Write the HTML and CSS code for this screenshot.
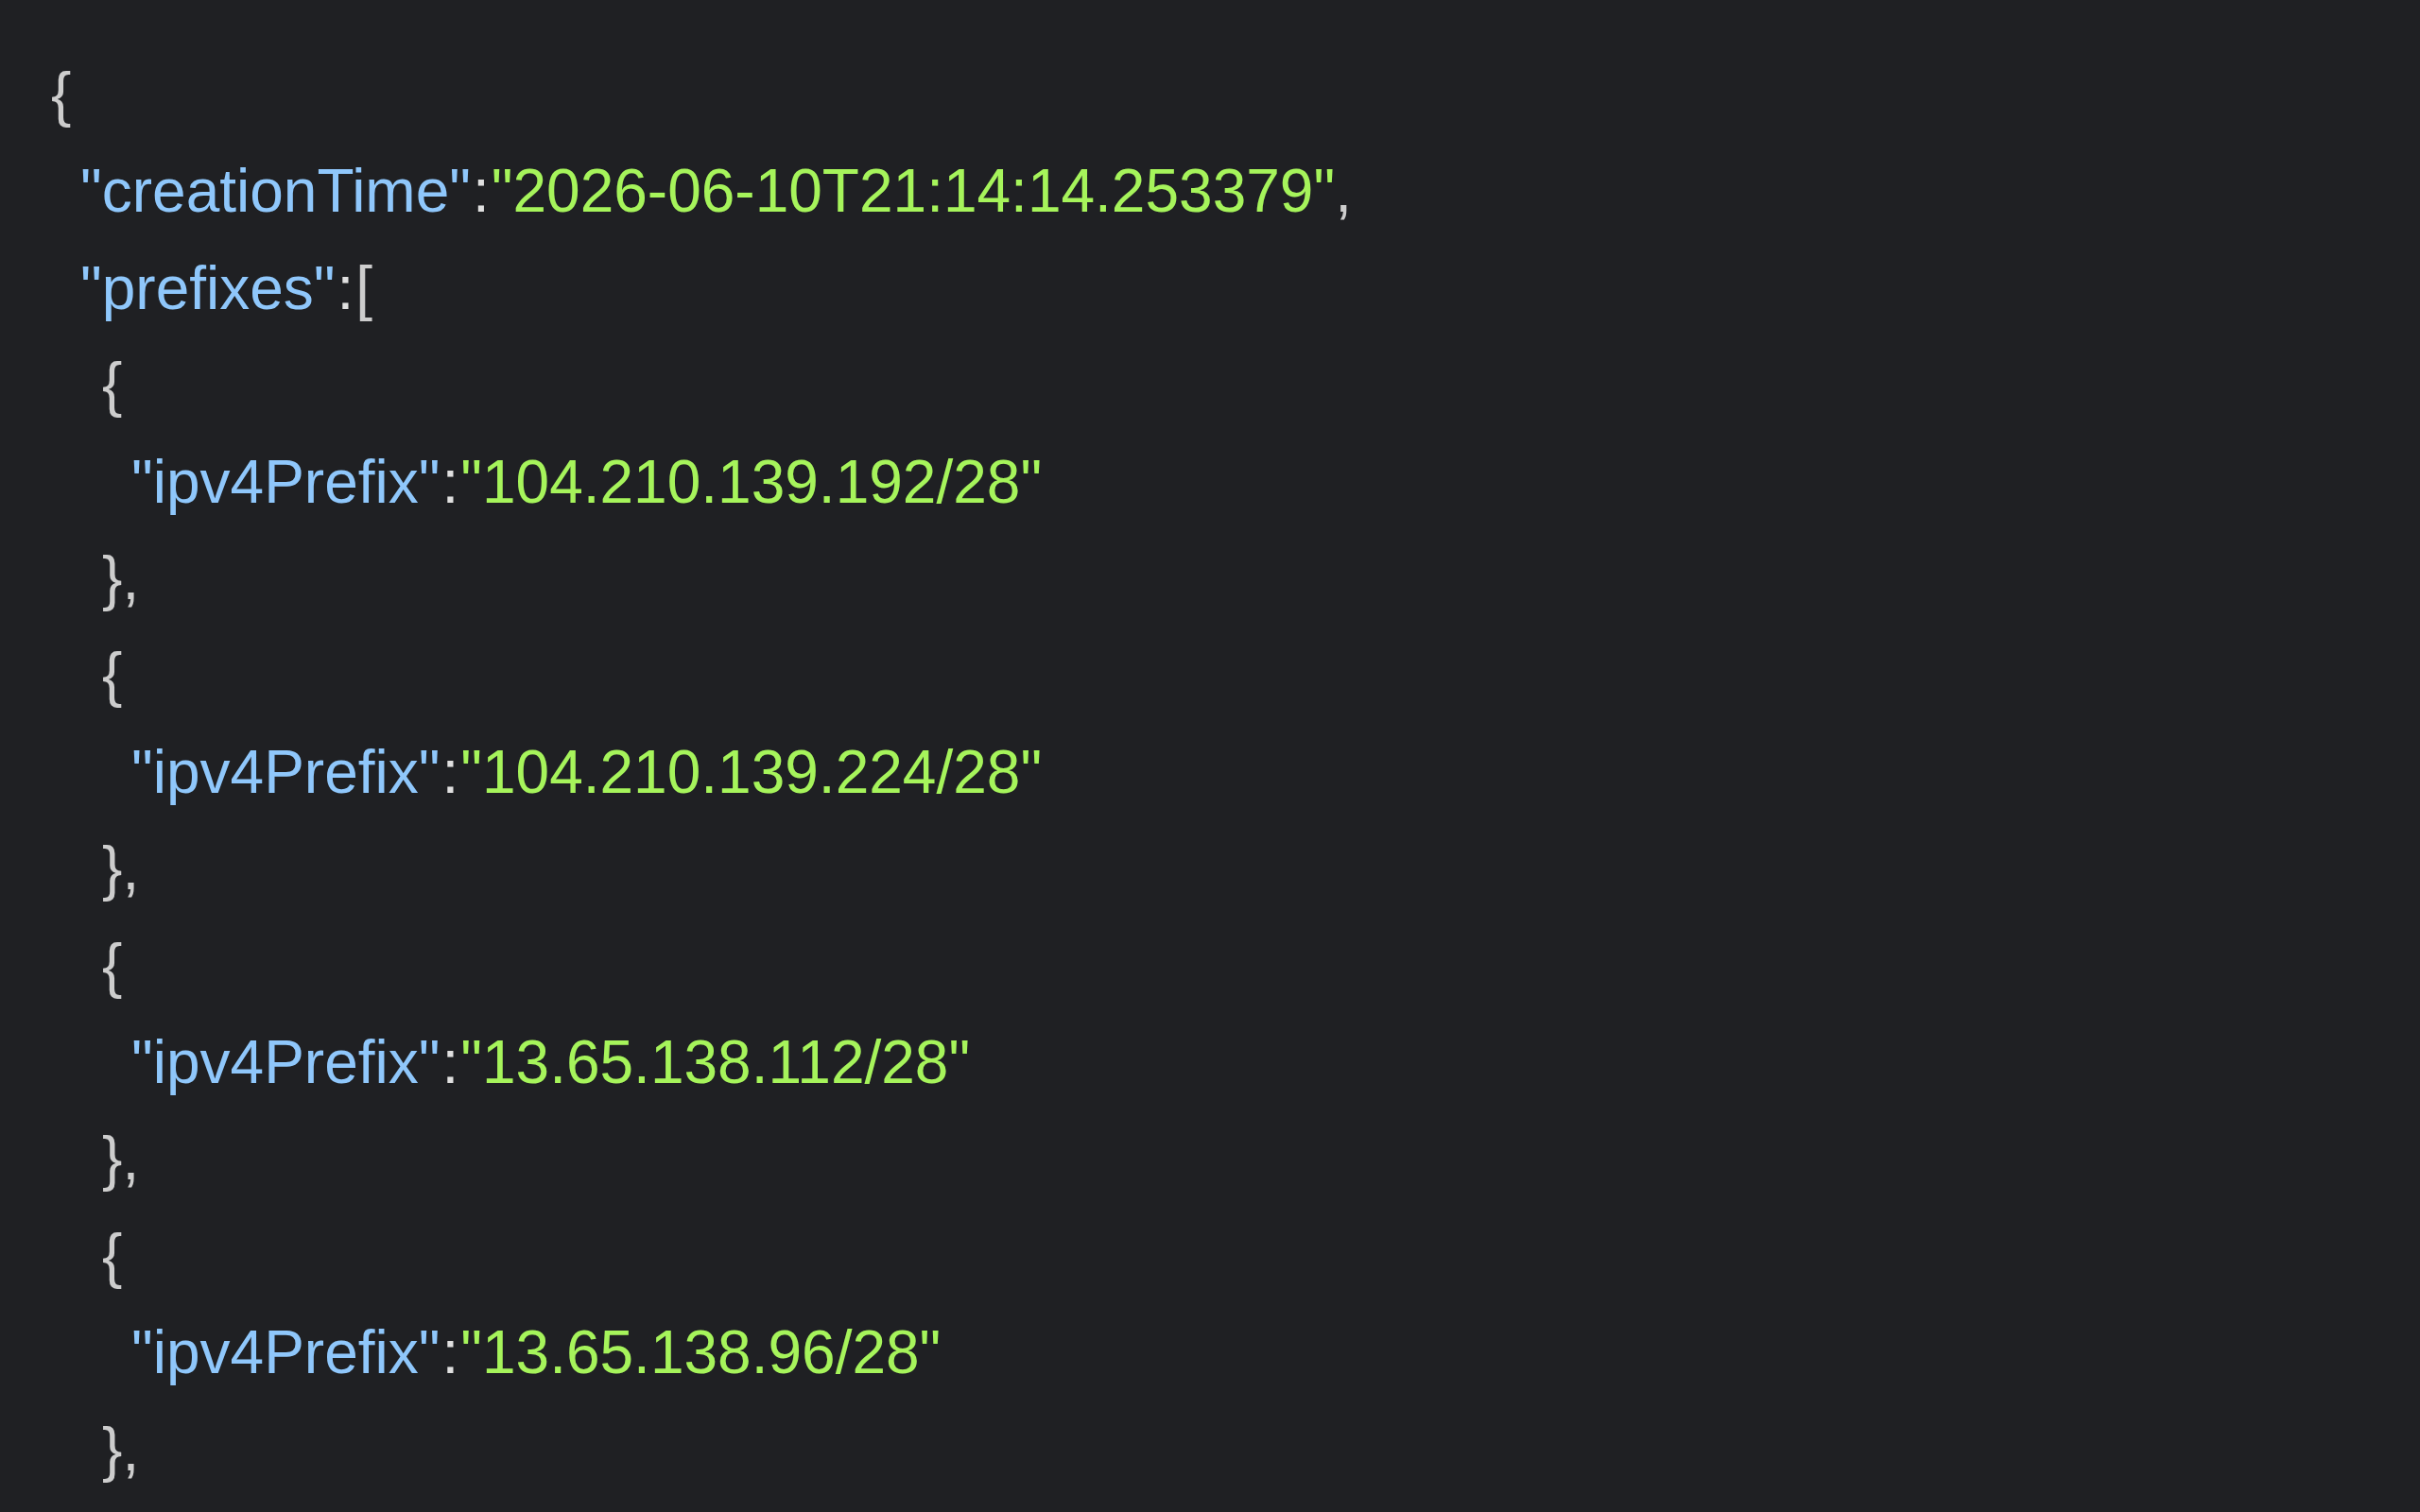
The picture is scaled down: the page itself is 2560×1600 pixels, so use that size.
FILE: index.html
```html
<!DOCTYPE html>
<html lang="en">
<head>
<meta charset="utf-8">
<title>JSON</title>
<link rel="stylesheet" href="styles.css">
</head>
<body>
<div class="json">
  <div class="line l0"><span class="p">{</span></div>
  <div class="line l1"><span class="k">"creationTime"</span><span class="c">:</span><span class="s">"2026-06-10T21:14:14.253379"</span><span class="p">,</span></div>
  <div class="line l1"><span class="k">"prefixes"</span><span class="c">:</span><span class="p">[</span></div>
  <div class="line l2"><span class="p">{</span></div>
  <div class="line l3"><span class="k">"ipv4Prefix"</span><span class="c">:</span><span class="s">"104.210.139.192/28"</span></div>
  <div class="line l2"><span class="p">},</span></div>
  <div class="line l2"><span class="p">{</span></div>
  <div class="line l3"><span class="k">"ipv4Prefix"</span><span class="c">:</span><span class="s">"104.210.139.224/28"</span></div>
  <div class="line l2"><span class="p">},</span></div>
  <div class="line l2"><span class="p">{</span></div>
  <div class="line l3"><span class="k">"ipv4Prefix"</span><span class="c">:</span><span class="s">"13.65.138.112/28"</span></div>
  <div class="line l2"><span class="p">},</span></div>
  <div class="line l2"><span class="p">{</span></div>
  <div class="line l3"><span class="k">"ipv4Prefix"</span><span class="c">:</span><span class="s">"13.65.138.96/28"</span></div>
  <div class="line l2"><span class="p">},</span></div>
</div>
</body>
</html>
```

FILE: styles.css
```css
html, body {
  margin: 0;
  padding: 0;
  background: #1f2023;
  height: 100%;
  overflow: hidden;
}

.json {
  padding: 49px 0 0 54px;
  font-family: "Liberation Sans", Arial, Helvetica, sans-serif;
  font-size: 64px;
  line-height: 102.4px;
  color: #c9c9c9;
}

.line {
  display: flex;
  white-space: pre;
}

.l1 { padding-left: 27px; }
.l2 { padding-left: 54px; }
.l3 { padding-left: 81px; }

.k { color: #8fc7fb; margin-left: 4px; }
.s { color: #a6f45b; }
.p { color: #cdcdcd; }
.c { color: #e0e0e0; margin: 0 2px; }
```
